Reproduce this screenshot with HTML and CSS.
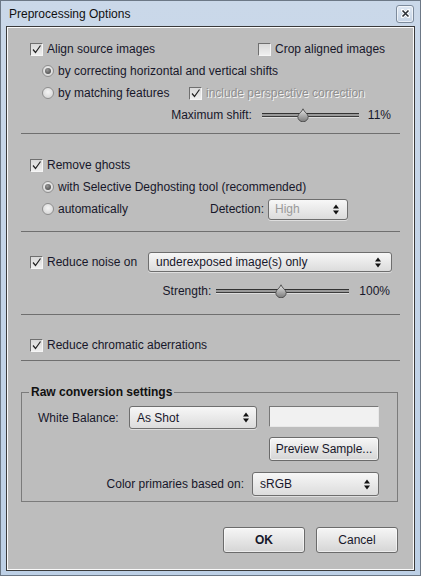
FILE: index.html
```html
<!DOCTYPE html>
<html>
<head>
<meta charset="utf-8">
<link rel="stylesheet" href="styles.css">
</head>
<body>
<div class="window">
  <div class="titlebar">
    <span class="title">Preprocessing Options</span>
    <span class="close"><svg width="9" height="9" viewBox="0 0 9 9"><path d="M1.5 1.5L7.5 7.5M7.5 1.5L1.5 7.5" stroke="#fff" stroke-width="3.2" stroke-linecap="square"/><path d="M1.5 1.5L7.5 7.5M7.5 1.5L1.5 7.5" stroke="#2a2f36" stroke-width="1.6"/></svg></span>
  </div>
  <div class="content">
    <div class="section s1">
      <div class="row split-a">
        <label class="opt"><span class="cb"><svg width="11" height="11" viewBox="0 0 11 11"><path d="M2 5.5L4.5 8.5L9.5 1.5" fill="none" stroke="#222" stroke-width="1.2"/></svg></span>Align source images</label>
        <label class="opt"><span class="cb"></span>Crop aligned images</label>
      </div>
      <div class="row sub">
        <label class="opt"><span class="rb on"></span>by correcting horizontal and vertical shifts</label>
      </div>
      <div class="row sub split-b">
        <label class="opt"><span class="rb"></span>by matching features</label>
        <label class="opt disabled"><span class="cb"><svg width="11" height="11" viewBox="0 0 11 11"><path d="M2 5.5L4.5 8.5L9.5 1.5" fill="none" stroke="#222" stroke-width="1.2"/></svg></span>include perspective correction</label>
      </div>
      <div class="row slider-row shift">
        <span class="slabel">Maximum shift:</span>
        <span class="slider s-shift"><span class="track"></span><svg class="thumb" style="left:41px" width="12" height="14" viewBox="0 0 12 14"><defs><linearGradient id="tg1" x1="0" y1="0" x2="0" y2="1"><stop offset="0" stop-color="#e8e8e8"/><stop offset="1" stop-color="#7a7a7a"/></linearGradient></defs><path d="M6 0.8C7 4 11.2 6 11.2 8.6A5.2 5.2 0 0 1 0.8 8.6C0.8 6 5 4 6 0.8Z" fill="url(#tg1)" stroke="#4a4a4a" stroke-width="0.9"/></svg></span>
        <span class="pct">11%</span>
      </div>
    </div>
    <div class="sep sep1"></div>

    <div class="section s2">
      <div class="row">
        <label class="opt"><span class="cb"><svg width="11" height="11" viewBox="0 0 11 11"><path d="M2 5.5L4.5 8.5L9.5 1.5" fill="none" stroke="#222" stroke-width="1.2"/></svg></span>Remove ghosts</label>
      </div>
      <div class="row sub">
        <label class="opt"><span class="rb on"></span>with Selective Deghosting tool (recommended)</label>
      </div>
      <div class="row sub detect-row">
        <label class="opt"><span class="rb"></span>automatically</label>
        <span class="detect">
          <span class="dlabel">Detection:</span>
          <span class="popup p-detect disabled-pop"><span>High</span><svg class="arr" width="6" height="11" viewBox="0 0 6 11"><path d="M3 0.5L6 4.5H0Z M3 10.5L6 6.5H0Z" fill="#111"/></svg></span>
        </span>
      </div>
    </div>
    <div class="sep sep2"></div>

    <div class="section s3">
      <div class="row noise-row">
        <label class="opt"><span class="cb"><svg width="11" height="11" viewBox="0 0 11 11"><path d="M2 5.5L4.5 8.5L9.5 1.5" fill="none" stroke="#222" stroke-width="1.2"/></svg></span>Reduce noise on</label>
        <span class="popup p-noise"><span>underexposed image(s) only</span><svg class="arr" width="6" height="11" viewBox="0 0 6 11"><path d="M3 0.5L6 4.5H0Z M3 10.5L6 6.5H0Z" fill="#111"/></svg></span>
      </div>
      <div class="row slider-row strength">
        <span class="slabel">Strength:</span>
        <span class="slider s-strength"><span class="track"></span><svg class="thumb" style="left:65px" width="12" height="14" viewBox="0 0 12 14"><defs><linearGradient id="tg2" x1="0" y1="0" x2="0" y2="1"><stop offset="0" stop-color="#e8e8e8"/><stop offset="1" stop-color="#7a7a7a"/></linearGradient></defs><path d="M6 0.8C7 4 11.2 6 11.2 8.6A5.2 5.2 0 0 1 0.8 8.6C0.8 6 5 4 6 0.8Z" fill="url(#tg2)" stroke="#4a4a4a" stroke-width="0.9"/></svg></span>
        <span class="pct">100%</span>
      </div>
    </div>
    <div class="sep sep3"></div>

    <div class="section s4">
      <div class="row">
        <label class="opt"><span class="cb"><svg width="11" height="11" viewBox="0 0 11 11"><path d="M2 5.5L4.5 8.5L9.5 1.5" fill="none" stroke="#222" stroke-width="1.2"/></svg></span>Reduce chromatic aberrations</label>
      </div>
    </div>
    <div class="sep sep4"></div>

    <fieldset class="group">
      <legend>Raw conversion settings</legend>
      <div class="g-row wb-row">
        <span class="glabel wb-label">White Balance:</span>
        <span class="popup p-wb"><span>As Shot</span><svg class="arr" width="6" height="11" viewBox="0 0 6 11"><path d="M3 0.5L6 4.5H0Z M3 10.5L6 6.5H0Z" fill="#111"/></svg></span>
        <span class="field"></span>
      </div>
      <div class="g-row preview-row">
        <span class="btn b-preview">Preview Sample...</span>
      </div>
      <div class="g-row color-row">
        <span class="glabel">Color primaries based on:</span>
        <span class="popup p-color"><span>sRGB</span><svg class="arr" width="6" height="11" viewBox="0 0 6 11"><path d="M3 0.5L6 4.5H0Z M3 10.5L6 6.5H0Z" fill="#111"/></svg></span>
      </div>
    </fieldset>

    <div class="buttons">
      <span class="btn b-dlg b-ok">OK</span>
      <span class="btn b-dlg">Cancel</span>
    </div>
  </div>
</div>
</body>
</html>
```

FILE: styles.css
```css
* { box-sizing: border-box; }

body {
  margin: 0;
  width: 421px;
  height: 576px;
  overflow: hidden;
  font-family: "Liberation Sans", Arial, sans-serif;
  font-size: 12px;
  color: #17172a;
}

.window {
  width: 421px;
  height: 576px;
  border: 1px solid #6c7886;
  background: linear-gradient(#cad8e9, #bdd0e6);
  padding: 0 5px 4px 5px;
  display: flex;
  flex-direction: column;
}

.titlebar {
  height: 25px;
  flex: none;
  display: flex;
  align-items: center;
  justify-content: space-between;
  padding-left: 3px;
}

.title {
  font-size: 12px;
  color: #111;
}

.close {
  width: 18px;
  height: 18px;
  margin-right: 1px;
  border: 1px solid #7d8b9c;
  border-radius: 3px;
  background: linear-gradient(#dfe8f3, #c6d4e5);
  box-shadow: inset 0 0 0 1px rgba(255,255,255,0.6);
  display: flex;
  align-items: center;
  justify-content: center;
}

.content {
  flex: 1;
  border: 1px solid #3a3a3a;
  box-shadow: inset 0 0 0 1px #fbfbfb;
  background: #bdbdbd;
  padding: 1px;
  display: flex;
  flex-direction: column;
}

.row {
  height: 22px;
  display: flex;
  align-items: center;
  padding-left: 22px;
}

.row.sub { padding-left: 34px; }

.opt {
  display: flex;
  align-items: center;
  white-space: nowrap;
}

.cb {
  width: 13px;
  height: 13px;
  margin-right: 4px;
  border: 1px solid;
  border-color: #6f6f6f #f6f6f6 #f6f6f6 #6f6f6f;
  background: linear-gradient(#d9d9d9, #efefef);
  display: flex;
  align-items: center;
  justify-content: center;
  flex: none;
}

.rb {
  width: 12px;
  height: 12px;
  margin-right: 4px;
  border-radius: 50%;
  border: 1px solid #8e8e8e;
  background: radial-gradient(circle at 50% 40%, #f4f4f4, #cfcfcf);
  display: flex;
  align-items: center;
  justify-content: center;
  flex: none;
}

.rb.on::after {
  content: "";
  width: 6px;
  height: 6px;
  border-radius: 50%;
  background: radial-gradient(circle at 40% 35%, #9a9a9a, #3a3a3a);
}

.split-a .opt:first-child { width: 228px; }
.split-b .opt:first-child { width: 147px; }

.opt.disabled {
  color: #8f8f8f;
  text-shadow: 1px 1px 0 #f4f4f4;
}

.s1 { margin-top: 10px; }
.s2 { margin-top: 20px; }
.s3 { margin-top: 19px; }
.s4 { margin-top: 19px; }

.sep {
  height: 1px;
  background: #6f6f6f;
  margin: 0 13px;
  flex: none;
}
.sep1 { margin-top: 7px; }
.sep2 { margin-top: 11px; }
.sep3 { margin-top: 12px; }
.sep4 { margin-top: 4px; }

.slider-row {
  justify-content: flex-end;
}
.shift { padding-right: 22px; }
.strength { padding-right: 23px; margin-top: 7px; }

.slider {
  position: relative;
  height: 14px;
  display: flex;
  align-items: center;
}
.s-shift { width: 97px; margin: 0 9px 0 10px; }
.s-strength { width: 133px; margin: 0 10px 0 5px; }

.track {
  width: 100%;
  height: 4px;
  border-top: 1px solid #333;
  border-bottom: 1px solid #3c3c3c;
  background: #9a9a9a;
  box-shadow: 0 1px 0 #dcdcdc;
}

.thumb {
  position: absolute;
  top: 0;
  margin-left: -6px;
}

.popup {
  display: flex;
  align-items: center;
  justify-content: space-between;
  border: 1px solid #6e6e6e;
  border-radius: 3px;
  background: linear-gradient(#f7f7f7, #dcdcdc);
  box-shadow: 0 1px 0 rgba(255,255,255,0.5);
  white-space: nowrap;
  flex: none;
}

.popup .arr { flex: none; }

.detect-row { justify-content: space-between; padding-right: 65px; }
.detect { display: flex; align-items: center; }
.dlabel { margin-right: 4px; }
.p-detect {
  width: 80px;
  height: 21px;
  padding: 0 8px 0 6px;
}
.disabled-pop { color: #9a9a9a; }

.noise-row { padding-right: 21px; justify-content: space-between; }
.p-noise {
  width: 244px;
  height: 20px;
  padding: 0 10px 0 7px;
}

.group {
  margin: 24px 15px 0 13px;
  border: 1px solid #7b7b7b;
  padding: 7px 18px 5px 16px;
  min-width: 0;
}

.group legend {
  font-weight: bold;
  line-height: 14px;
  padding: 0 2px;
  margin-left: -9px;
  color: #111;
}

.g-row {
  display: flex;
  align-items: center;
}

.wb-row { height: 23px; align-items: flex-start; }
.wb-row .glabel { align-self: center; }
.wb-label { width: 91px; flex: none; }
.p-wb {
  width: 128px;
  height: 23px;
  padding: 0 7px 0 7px;
}
.field {
  width: 110px;
  height: 21px;
  margin-left: 12px;
  border: 1px solid;
  border-color: #777 #e8e8e8 #e8e8e8 #777;
  background: #f1f1f1;
}

.preview-row { justify-content: flex-end; margin-top: 8px; }

.btn {
  display: flex;
  align-items: center;
  justify-content: center;
  border: 1px solid #6b6b6b;
  border-radius: 3px;
  background: linear-gradient(#f6f6f6, #d5d5d5);
  box-shadow: inset 0 0 0 1px rgba(255,255,255,0.55);
  white-space: nowrap;
}

.b-preview { width: 110px; height: 24px; }

.color-row { justify-content: flex-end; margin-top: 11px; }
.p-color {
  width: 127px;
  height: 24px;
  margin-left: 8px;
  padding: 0 8px 0 7px;
}

.buttons {
  display: flex;
  justify-content: flex-end;
  gap: 11px;
  margin-top: 25px;
  padding-right: 15px;
}

.b-dlg {
  width: 82px;
  height: 26px;
  font-size: 12px;
}
.b-ok { font-weight: bold; }
```
